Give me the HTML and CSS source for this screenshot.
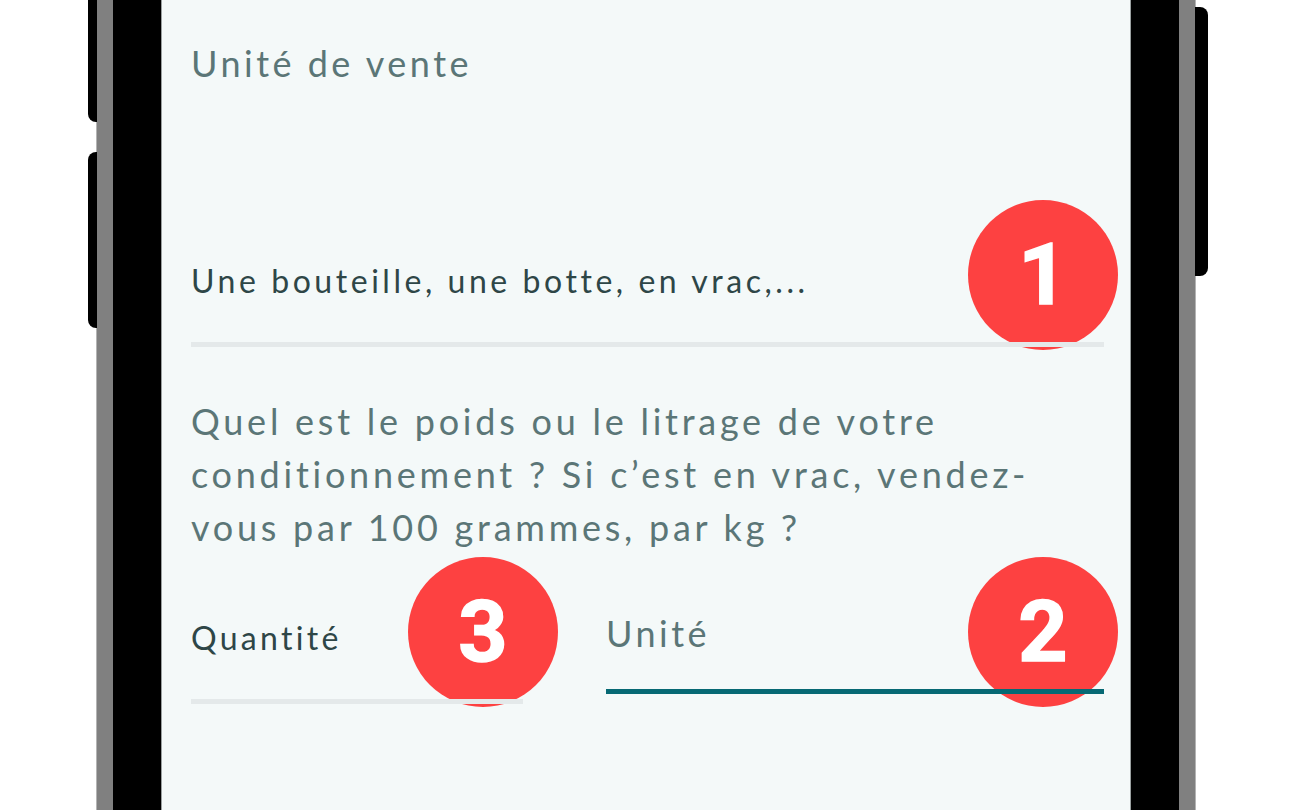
FILE: index.html
```html
<!DOCTYPE html>
<html lang="fr">
<head>
<meta charset="utf-8">
<title>Unité de vente</title>
<link rel="stylesheet" href="styles.css">
</head>
<body>
<div class="phone">
  <span class="side-btn side-btn--l1"></span>
  <span class="side-btn side-btn--l2"></span>
  <span class="side-btn side-btn--r1"></span>
  <div class="bezel">
    <div class="screen">
      <div class="form">
        <div class="field">
          <div class="label">Unité de vente</div>
          <div class="input input--first"><span class="value">Une bouteille, une botte, en vrac,...</span></div>
        </div>
        <p class="question">Quel est le poids ou le litrage de votre<br>conditionnement ? Si c’est en vrac, vendez-<br>vous par 100 grammes, par kg ?</p>
        <div class="row">
          <div class="field field--qty">
            <div class="input input--qty"><span class="value">Quantité</span></div>
          </div>
          <div class="field field--unit">
            <div class="input input--focused"><span class="label">Unité</span></div>
          </div>
        </div>
      </div>
      <span class="badge badge--1">1</span>
      <span class="badge badge--2">2</span>
      <span class="badge badge--3">3</span>
    </div>
  </div>
</div>
</body>
</html>
```

FILE: styles.css
```css
html, body {
  margin: 0;
  padding: 0;
}
body {
  background: #ffffff;
  width: 1296px;
  height: 810px;
  overflow: hidden;
  font-family: "Lato", "Liberation Sans", sans-serif;
}
.phone {
  position: relative;
  margin-left: 97px;
  width: 1098px;
  height: 810px;
  box-sizing: border-box;
  padding: 0 16px;
  background: #808080;
  box-shadow: -1px 0 0 #b4b4b4, 1px 0 0 #b4b4b4;
}
.side-btn {
  position: absolute;
  background: #000;
}
.side-btn--l1 {
  left: -9px;
  top: -20px;
  width: 9px;
  height: 142px;
  border-radius: 8px 0 0 8px;
}
.side-btn--l2 {
  left: -9px;
  top: 152px;
  width: 9px;
  height: 176px;
  border-radius: 8px 0 0 8px;
}
.side-btn--r1 {
  left: 1098px;
  top: 7px;
  width: 13px;
  height: 269px;
  border-radius: 0 8px 8px 0;
}
.bezel {
  height: 100%;
  background: #000;
  padding: 0 48px;
}
.screen {
  position: relative;
  width: 970px;
  height: 810px;
  background: #f4f9f9;
  box-shadow: inset 1px 0 0 #9aa0a0, inset -1px 0 0 #9aa0a0;
}
.form {
  padding: 36px 27px 0 30px;
}
.label {
  font-size: 36px;
  line-height: 54px;
  letter-spacing: 3.5px;
  color: #5b7677;
  white-space: nowrap;
}
.input {
  position: relative;
  z-index: 2;
  border-bottom: 5px solid #e4e9ea;
}
.value {
  display: block;
  font-size: 32px;
  line-height: 48px;
  letter-spacing: 3.55px;
  color: #2e4647;
  white-space: nowrap;
}
.input--first {
  padding: 167px 0 37px;
}
.question {
  margin: 48px 0 0;
  font-size: 36px;
  line-height: 53px;
  letter-spacing: 3.75px;
  color: #5b7677;
  white-space: nowrap;
}
.row {
  display: flex;
  align-items: flex-start;
  gap: 83px;
}
.field--qty {
  flex: 0 0 332px;
}
.field--unit {
  flex: 1 1 auto;
}
.input--qty {
  padding: 60px 0 37px;
}
.input--qty .value {
  letter-spacing: 3.3px;
}
.input--focused {
  padding: 52px 0 29px;
  border-bottom-color: #066974;
}
.badge {
  position: absolute;
  z-index: 1;
  width: 150px;
  height: 150px;
  border-radius: 50%;
  background: #fd4141;
  color: #ffffff;
  display: flex;
  align-items: center;
  justify-content: center;
  font-family: "Roboto", "Liberation Sans", sans-serif;
  font-weight: 700;
  font-size: 86px;
  line-height: 1;
  -webkit-text-stroke: 1.5px #ffffff;
}
.badge--1 {
  left: 807px;
  top: 200px;
}
.badge--2 {
  left: 807px;
  top: 557px;
}
.badge--3 {
  left: 247px;
  top: 557px;
}
```
